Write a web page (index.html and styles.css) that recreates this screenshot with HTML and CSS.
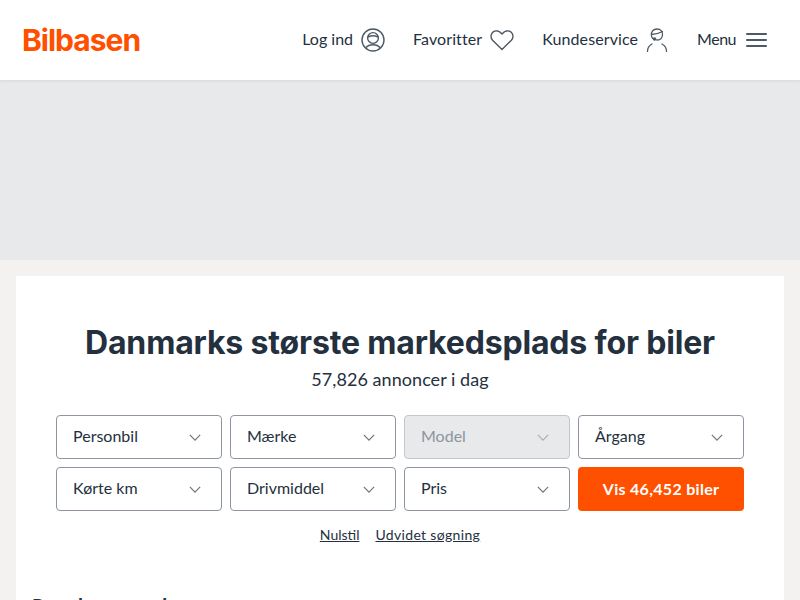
FILE: index.html
```html
<!DOCTYPE html>
<html lang="da">
<head>
<meta charset="utf-8">
<title>Bilbasen</title>
<link rel="stylesheet" href="styles.css">
</head>
<body>
<header class="topbar">
  <a class="logo">Bilbasen</a>
  <nav class="nav">
    <a class="nav-item nav-login"><span class="nav-label">Log ind</span>
      <svg class="nav-icon" width="24" height="24" viewBox="0 0 24 24" fill="none" stroke="#4d5966" stroke-width="1.4"><circle cx="12" cy="12" r="11"/><circle cx="12" cy="10" r="5.4"/><path d="M7 9c3-1.500 7-1.500 10 0M4.500 20c2-2.300 4.500-3.200 7.500-3.200s5.500.9 7.500 3.200"/></svg>
    </a>
    <a class="nav-item nav-fav"><span class="nav-label">Favoritter</span>
      <svg class="nav-icon" width="24" height="22" viewBox="0 0 24 22" fill="none" stroke="#4d5966" stroke-width="1.4" stroke-linejoin="round"><path d="M12 20.500 2.600 11.200C.2 8.600.6 4.600 3.200 2.800c2.700-1.800 6.300-1 8.800 2.200 2.500-3.200 6.100-4 8.800-2.200 2.600 1.800 3 5.800.6 8.400z"/></svg>
    </a>
    <a class="nav-item nav-service"><span class="nav-label">Kundeservice</span>
      <svg class="nav-icon" width="22" height="24" viewBox="0 0 22 24" fill="none" stroke="#4d5966" stroke-width="1.300" stroke-linecap="round"><path d="M5.500 7.500C4.800 3.500 7.500 1 11 1c3.500 0 6 2.400 5.500 6-.4 3-2.500 5-5 5-1 0-2-.3-3-1"/><path d="M5.500 6.500c3.500-.2 7.500-1 11-3M5.500 8.500c.5 1.500 1.500 2.300 3 2.500"/><circle cx="8.500" cy="11" r="1.100" fill="#4d5966"/><path d="M1.500 23.500c0-3.500 1.500-6 4.500-7.500M20.500 23.500c0-3.500-1.500-6-4.500-7.500"/></svg>
    </a>
    <a class="nav-item nav-menu"><span class="nav-label">Menu</span>
      <span class="burger"><i></i><i></i><i></i></span>
    </a>
  </nav>
</header>
<div class="ad-band"></div>
<main class="page">
  <section class="card">
    <h1 class="title">Danmarks største markedsplads for biler</h1>
    <p class="subtitle">57,826 annoncer i dag</p>
    <form class="search-grid">
      <div class="select"><span>Personbil</span><svg class="chev" width="12" height="7" viewBox="0 0 14 8"><path d="M1 1l6 6 6-6"/></svg></div>
      <div class="select"><span>Mærke</span><svg class="chev" width="12" height="7" viewBox="0 0 14 8"><path d="M1 1l6 6 6-6"/></svg></div>
      <div class="select disabled"><span>Model</span><svg class="chev" width="12" height="7" viewBox="0 0 14 8"><path d="M1 1l6 6 6-6"/></svg></div>
      <div class="select"><span>Årgang</span><svg class="chev" width="12" height="7" viewBox="0 0 14 8"><path d="M1 1l6 6 6-6"/></svg></div>
      <div class="select"><span>Kørte km</span><svg class="chev" width="12" height="7" viewBox="0 0 14 8"><path d="M1 1l6 6 6-6"/></svg></div>
      <div class="select"><span>Drivmiddel</span><svg class="chev" width="12" height="7" viewBox="0 0 14 8"><path d="M1 1l6 6 6-6"/></svg></div>
      <div class="select"><span>Pris</span><svg class="chev" width="12" height="7" viewBox="0 0 14 8"><path d="M1 1l6 6 6-6"/></svg></div>
      <button class="cta" type="button"><span class="cta-label">Vis 46,452 biler</span></button>
    </form>
    <div class="links"><a class="link-reset">Nulstil</a><a class="link-advanced">Udvidet søgning</a></div>
    <h2 class="section-title">Populære mærker</h2>
  </section>
</main>
</body>
</html>
```
FILE: styles.css
```css
* { box-sizing: border-box; }
html, body { height: 600px; overflow: hidden; }
body {
  margin: 0;
  background: #f3f2f0;
  font-family: "Lato", "Liberation Sans", sans-serif;
  color: #24303e;
}
.topbar {
  height: 80px;
  background: #fff;
  display: flex;
  align-items: center;
  justify-content: space-between;
  padding: 0 33px 0 22px;
  box-shadow: 0 1px 3px rgba(0,0,0,.08);
  position: relative;
}
.logo {
  color: #ff5000;
  font-family: "Inter", sans-serif;
  font-weight: 700;
  font-size: 30px;
  letter-spacing: -1px;
  line-height: 36px;
}
.nav { display: flex; align-items: center; gap: 28px; }
.nav-item { display: flex; align-items: center; gap: 8px; font-size: 16px; color: #24303e; }
.nav-label { margin-bottom: 4px; }
.nav-fav .nav-label { letter-spacing: .1px; }
.nav-service .nav-label { letter-spacing: .1px; }
.nav-menu { margin-left: 1px; gap: 10px; }
.nav-menu .nav-label { letter-spacing: -.5px; }
.burger { display: flex; flex-direction: column; gap: 4px; width: 21px; }
.burger i { display: block; height: 2px; background: #4d5966; border-radius: 1px; }
.ad-band { height: 180px; background: #e8e9eb; }
.page { padding: 16px 16px 0; }
.card { background: #fff; padding: 48px 40px 0; height: 340px; position: relative; }
.title { margin: 0; text-align: center; font-size: 32px; line-height: 38px; font-weight: 700; font-family: "Inter", sans-serif; letter-spacing: -.16px; color: #24303e; }
.subtitle { margin: 5px 0 0; text-align: center; font-size: 18px; line-height: 24px; letter-spacing: .05px; color: #24303e; }
.search-grid { display: grid; grid-template-columns: repeat(4, 1fr); gap: 8px; margin-top: 24px; }
.select {
  height: 44px;
  border: 1px solid #8c95a0;
  border-radius: 4px;
  display: flex;
  align-items: center;
  justify-content: space-between;
  padding: 0 20px 0 16px;
  font-size: 16px;
  background: #fff;
}
.select span { margin-bottom: 4px; }
.select.disabled { background: #e8e9eb; color: #8c95a0; border-color: #c3c7cc; }
.chev { fill: none; stroke: #6b7580; stroke-width: 1.4; }
.disabled .chev { stroke: #a9afb6; }
.cta { height: 44px; border: 0; border-radius: 4px; background: #ff5000; color: #fff; font: 700 16px "Lato", sans-serif; letter-spacing: .3px; padding: 0 0 2px; }
.links { display: flex; justify-content: center; gap: 16px; margin-top: 15px; font-size: 14px; line-height: 18px; }
.links a { text-decoration: underline; color: #24303e; }
.link-advanced { letter-spacing: .33px; }
.section-title { margin: 50px 0 0 -24px; font-size: 20px; font-weight: 700; line-height: 24px; }
```
